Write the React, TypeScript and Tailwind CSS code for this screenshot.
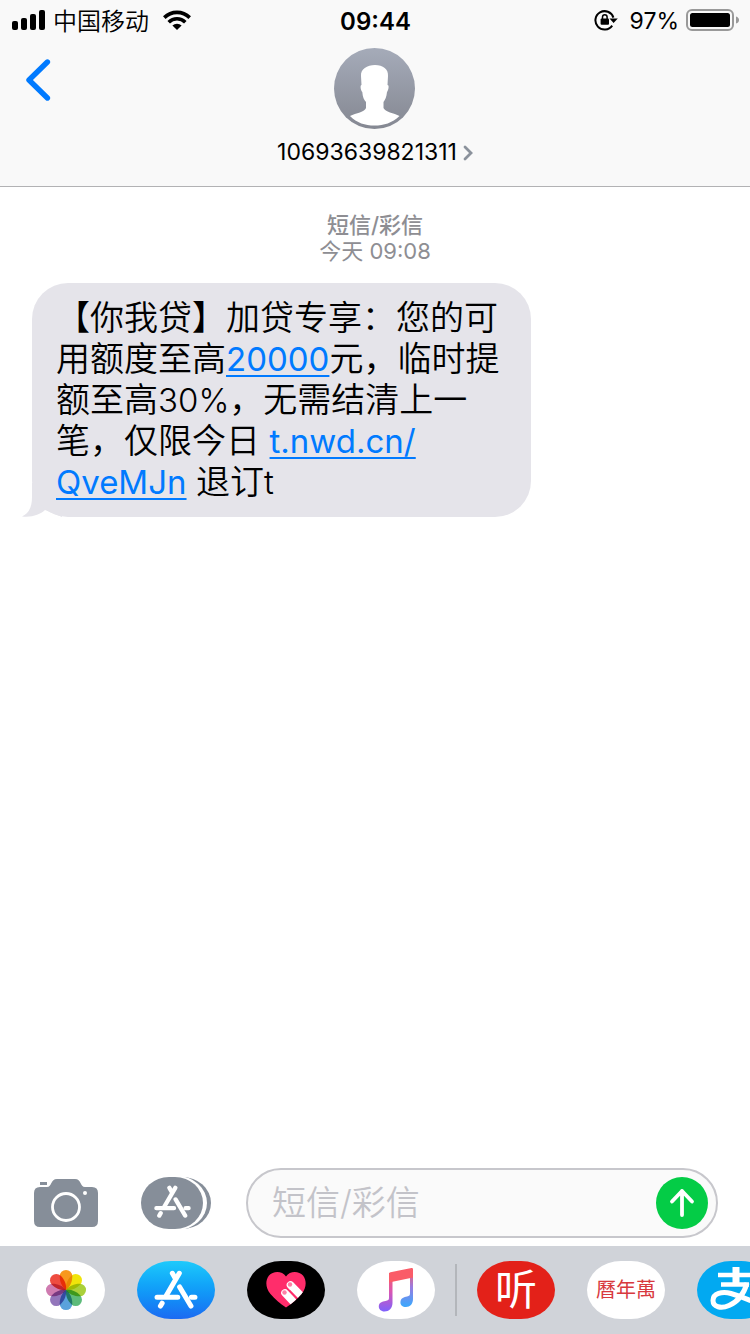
import type { ReactNode } from 'react';

const petals = ['#f8981d', '#f0e40a', '#aad03a', '#5dbb7a', '#5aa2dc', '#9376bb', '#cf7bb0', '#ee4c40'];

const StatusBar = () => (
  <div className="grid h-10 grid-cols-[1fr_auto_1fr] items-center pr-[11px] pl-3">
    <div className="flex items-center">
      <svg width="34" height="20" viewBox="0 0 34 20">
        <rect x="0" y="11" width="6" height="9" rx="2" />
        <rect x="9" y="8" width="6" height="12" rx="2" />
        <rect x="18" y="4" width="6" height="16" rx="2" />
        <rect x="27" y="0" width="6" height="20" rx="2" />
      </svg>
      <span className="ml-[7px] pt-[3px] text-2xl font-[350]">中国移动</span>
      <svg width="28" height="20" viewBox="0 0 28 20" className="ml-[14px]" fill="none" stroke="#000" strokeWidth="3.6">
        <path d="M1.3 7.6A18 18 0 0 1 26.7 7.6" />
        <path d="M5.7 12.2A11.8 11.8 0 0 1 22.3 12.2" />
        <path d="M14 20L9.4 15.6A6.6 6.6 0 0 1 18.6 15.6Z" fill="#000" stroke="none" />
      </svg>
    </div>
    <span className="pt-[3px] text-2xl font-semibold">09:44</span>
    <div className="flex items-center justify-end">
      <svg width="24" height="22" viewBox="0 0 24 22">
        <path d="M18.2 16.6A9.2 9.2 0 1 1 19.4 8.6" fill="none" stroke="#000" strokeWidth="2" />
        <path d="M15.5 9.4H23.8L19.6 14Z" />
        <rect x="6.6" y="9.6" width="8.4" height="6.2" rx="1" />
        <path d="M8.5 10V8A2.3 2.3 0 0 1 13.1 8V10" fill="none" stroke="#000" strokeWidth="1.5" />
      </svg>
      <span className="ml-3 pt-[3px] text-[23px]">97%</span>
      <svg width="53" height="22" viewBox="0 0 53 22" className="ml-[7px]">
        <rect x="1" y="1" width="46" height="20" rx="5" fill="none" stroke="#999" strokeWidth="2" />
        <rect x="4" y="4" width="40" height="14" rx="2.5" />
        <path d="M50 7.5Q53 8.5 53 11T50 14.5Z" fill="#999" />
      </svg>
    </div>
  </div>
);

const Header = () => (
  <header className="border-b border-[#b2b2b4] bg-[#f9f9f9]">
    <StatusBar />
    <div className="grid grid-cols-[1fr_auto_1fr] items-start pt-2 pb-[21px]">
      <button type="button" aria-label="返回" className="mt-[11px] ml-[25px] w-[26px]">
        <svg width="26" height="42" viewBox="0 0 26 42" fill="none" stroke="#007aff" strokeWidth="5.4" strokeLinecap="round" strokeLinejoin="round">
          <path d="M22.4 3L4 21L22.4 39" />
        </svg>
      </button>
      <button type="button" className="flex flex-col items-center">
        <svg width="81" height="81" viewBox="0 0 81 81">
          <defs>
            <linearGradient id="avatar" x1="0" y1="0" x2="0" y2="1">
              <stop offset="0" stopColor="#a5abb9" />
              <stop offset="1" stopColor="#858892" />
            </linearGradient>
          </defs>
          <circle cx="40.5" cy="40.5" r="40.5" fill="url(#avatar)" />
          <path
            fill="#fff"
            d="M41 17C49 17 54.5 21 54 28L53.5 37C55.5 37 54.5 42 53 44C52.5 49 51 52 49.5 54V60C51 64 60 65 65.5 68C58 75 50 77.5 40.5 77.5C31 77.5 23 75 16 68C22 65 31 64 32 60V54C30 52 28.7 49 28.3 44C26.5 42 26 37 27.5 37L27 28C26.5 21 33 17 41 17Z"
          />
        </svg>
        <span className="mt-[10px] flex items-center gap-[6px] text-[23px] leading-[26px]">
          10693639821311
          <svg width="10" height="16" viewBox="0 0 10 16" fill="none" stroke="#8b929c" strokeWidth="2.8" strokeLinecap="round" className="mt-[2px]">
            <path d="M2 2L8 8L2 14" />
          </svg>
        </span>
      </button>
    </div>
  </header>
);

const Message = () => (
  <div className="relative mt-[19px] ml-8 w-fit">
    {/* Bubble tail */}
    <svg width="40" height="34" viewBox="0 0 40 34" className="absolute bottom-0 -left-[10px]" fill="#e5e4ea">
      <path d="M10 0V14C10 25 6 31 0 33.4C10 34.6 18 31.5 23 27L40 34V0Z" />
    </svg>
    <p className="relative rounded-[36px] bg-[#e5e4ea] pt-[14px] pr-8 pb-[15px] pl-6 text-[34px] leading-[41px] font-[350]">
      【你我贷】加贷专享：您的可
      <br />
      用额度至高
      <a href="#amount" className="text-[33px] leading-none font-normal text-[#007aff] underline decoration-2 underline-offset-4">20000</a>
      元，临时提
      <br />
      额至高<span className="text-[33px] leading-none">30%</span>，无需结清上一
      <br />
      笔，仅限今日{' '}
      <a href="#link" className="text-[33px] leading-none font-normal text-[#007aff] underline decoration-2 underline-offset-4">
        t.nwd.cn/
        <br />
        QveMJn
      </a>{' '}
      退订<span className="text-[33px] leading-none">t</span>
    </p>
  </div>
);

const AppStoreGlyph = ({ width, height }: { width: number; height: number }) => (
  <svg width={width} height={height} viewBox="13 8 37 34" fill="none" stroke="#fff" strokeWidth="4.3" strokeLinecap="round">
    <path d="M34.3 10.8L23.4 29.5M19.7 36.2L18.3 38.6" />
    <path d="M28.4 10.8L30.6 14.6M34.6 22.4L44.2 38.6" />
    <path d="M15.4 31.2H33M44.6 31.2H47.6" />
  </svg>
);

const Composer = () => (
  <form className="flex items-center pt-1 pr-8 pb-2 pl-[34px]" onSubmit={(e) => e.preventDefault()}>
    <button type="button" aria-label="相机">
      <svg width="64" height="48" viewBox="0 0 64 48" fill="#868e99">
        <path d="M6 8H13C18 8 16.5 0 23 0H41C47.5 0 46 8 51 8H58Q64 8 64 14V42Q64 48 58 48H6Q0 48 0 42V14Q0 8 6 8Z" />
        <rect x="6" y="3" width="7" height="3" />
        <circle cx="32" cy="28" r="13.5" fill="none" stroke="#fff" strokeWidth="2.8" />
        <circle cx="51" cy="14" r="2" fill="#fff" />
      </svg>
    </button>
    <button type="button" aria-label="App" className="ml-[43px] grid">
      <svg width="70" height="52" viewBox="0 0 70 52" className="col-start-1 row-start-1">
        <rect x="8" width="62" height="52" rx="29" ry="26" fill="#868e99" />
        <rect x="0" y="-1" width="66" height="54" rx="30" ry="27" fill="#fff" />
        <rect width="62" height="52" rx="28" ry="26" fill="#868e99" />
      </svg>
      <span className="col-start-1 row-start-1 mt-2 ml-[13px]">
        <AppStoreGlyph width={37} height={34} />
      </span>
    </button>
    <div className="ml-[35px] flex h-[70px] min-w-0 flex-1 items-center rounded-full border-2 border-[#c7c7cc] bg-[#fafafa] pr-2 pl-6">
      <input
        type="text"
        aria-label="短信/彩信"
        placeholder="短信/彩信"
        className="min-w-0 flex-1 bg-transparent text-[34px] leading-[42px] font-[350] outline-none placeholder:text-[#c3c3c9]"
      />
      <button type="submit" aria-label="发送" className="flex size-[52px] items-center justify-center rounded-full bg-[#04cc46]">
        <svg width="26" height="30" viewBox="0 0 26 30" fill="none" stroke="#fff" strokeWidth="3.8" strokeLinecap="round" strokeLinejoin="round">
          <path d="M13 27V3M3 13.5L13 3L23 13.5" />
        </svg>
      </button>
    </div>
  </form>
);

const AppButton = ({ label, className, children }: { label: string; className: string; children: ReactNode }) => (
  <button
    type="button"
    aria-label={label}
    className={`flex h-[58px] w-[78px] shrink-0 items-center justify-center overflow-hidden rounded-[34px/29px] ${className}`}
  >
    {children}
  </button>
);

const AppDrawer = () => (
  <nav className="flex h-[88px] items-center overflow-hidden bg-[#d0d3d9] pl-[27px]">
    <div className="flex shrink-0 gap-8">
      <AppButton label="照片" className="bg-white">
        <svg width="42" height="42" viewBox="-21 -21 42 42" className="isolate">
          {petals.map((color, i) => (
            <path
              key={color}
              d="M0 0C-4 -3 -6.3 -8 -6.3 -13.7A6.3 6.3 0 0 1 6.3 -13.7C6.3 -8 4 -3 0 0Z"
              fill={color}
              transform={`rotate(${i * 45})`}
              className="mix-blend-multiply"
            />
          ))}
        </svg>
      </AppButton>
      <AppButton label="App Store" className="bg-linear-to-b from-[#1fcafb] to-[#1c6af2]">
        <AppStoreGlyph width={44} height={40} />
      </AppButton>
      <AppButton label="Digital Touch" className="bg-black">
        <svg width="40" height="36" viewBox="0 0 40 36">
          <defs>
            <clipPath id="heart">
              <path d="M20 4.5C24-1.5 33-1 37 3.5C41 8.5 40.5 16 35.5 22C31 27.5 26 31.5 20 35.5C14 31.5 9 27.5 4.5 22C-.5 16-1 8.5 3 3.5C7-1 16-1.5 20 4.5Z" />
            </clipPath>
          </defs>
          <g clipPath="url(#heart)">
            <rect width="40" height="36" fill="#ff2d6b" />
            <g stroke="#fff" strokeWidth="7.6" strokeLinecap="round">
              <path d="M24.5 13L42 31" />
              <path d="M19 21L36 39" />
            </g>
            <g fill="#ff7fa6">
              <circle cx="24" cy="12.5" r="2.2" />
              <circle cx="18.5" cy="20.5" r="2.2" />
            </g>
            <path d="M23.5 18L40 35" stroke="#ff2d6b" strokeWidth="1" />
          </g>
        </svg>
      </AppButton>
      <AppButton label="音乐" className="bg-white">
        <svg width="36" height="46" viewBox="0 0 36 46">
          <defs>
            <linearGradient id="noteLeft" gradientUnits="userSpaceOnUse" x1="0" y1="6" x2="0" y2="44">
              <stop offset="0" stopColor="#fb5c64" />
              <stop offset=".5" stopColor="#d856b4" />
              <stop offset="1" stopColor="#8061fb" />
            </linearGradient>
            <linearGradient id="noteRight" gradientUnits="userSpaceOnUse" x1="0" y1="2" x2="0" y2="38">
              <stop offset="0" stopColor="#fb5c64" />
              <stop offset=".5" stopColor="#9a7be0" />
              <stop offset="1" stopColor="#41a5fb" />
            </linearGradient>
          </defs>
          <path fill="url(#noteRight)" d="M32 2H35V32C35 37 32 40 28 40C24 40 22 37.5 22.5 34.5C23 31 26 30 29 29.5C31.5 29 32 28.5 32 26Z" />
          <path fill="url(#noteLeft)" d="M11 6H14.5V36C14.5 41 11 44.5 6.5 44.5C3 44.5 .5 42 .8 39C1.2 35.5 4 34.5 7.5 34C10 33.5 11 33 11 31Z" />
          <path fill="#fa5c68" d="M11 7Q11 5.5 12.5 5.2L33.5 1Q35 .8 35 2.2V10.5L11 15.5Z" />
        </svg>
      </AppButton>
    </div>
    <div className="mx-5 h-[52px] w-[2px] shrink-0 bg-[#b3b6bb]" />
    <div className="flex shrink-0 gap-8">
      <AppButton label="听" className="bg-[#e32119]">
        <span className="text-[42px] leading-none text-white">听</span>
      </AppButton>
      <AppButton label="曆年萬" className="bg-white">
        <span className="text-[20px] leading-none text-[#d8393e]">曆年萬</span>
      </AppButton>
      <AppButton label="支付宝" className="bg-[#02a9f1]">
        {/* Alipay mark: two bars, a post and the looping ribbon */}
        <svg width="78" height="58" viewBox="0 0 78 58" fill="none" stroke="#fff" className="shrink-0">
          <path d="M39 6V23" strokeWidth="7" />
          <path d="M21 14H57" strokeWidth="4.4" />
          <path d="M24 23.5H52" strokeWidth="4.4" />
          <path d="M50 22C47 33 40 41 32 44.5C24 48 16 46 16 39.5C16 32.500 25 30 34 32.5C44 35.5 54 40 66 44" strokeWidth="5" />
        </svg>
      </AppButton>
    </div>
  </nav>
);

export default function App() {
  return (
    <div className="flex min-h-screen flex-col overflow-hidden bg-white font-['Inter','Noto_Sans_CJK_SC',sans-serif] text-black" lang="zh-CN">
      <Header />
      <main className="flex-1 pt-[25px]">
        <div className="text-center text-[22px] leading-[26px] text-[#8e8e93]">
          <p className="font-medium">短信/彩信</p>
          <p>今天 09:08</p>
        </div>
        <Message />
      </main>
      <Composer />
      <AppDrawer />
    </div>
  );
}
